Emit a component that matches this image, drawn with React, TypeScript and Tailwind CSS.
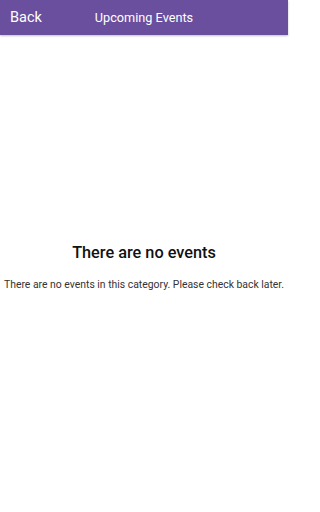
import React from "react";

export default function App() {
  return (
    <div className="flex h-[512px] w-[288px] flex-col bg-white font-['Roboto',sans-serif]">
      {/* Header */}
      <div className="grid h-[35px] shrink-0 grid-cols-[1fr_auto_1fr] items-center bg-[#6a4f9e] shadow-[0_1px_2px_rgba(0,0,0,0.25)]">
        <span className="ml-[10px] pt-[1px] text-[14.5px] leading-none text-white">Back</span>
        <span className="pt-[2px] text-[12.7px] leading-none text-white">Upcoming Events</span>
        <span />
      </div>

      {/* Empty state */}
      <div className="flex flex-1 flex-col items-center justify-center pb-[12px]">
        <h2 className="text-[16.3px] font-medium leading-none text-[#111]">There are no events</h2>
        <p className="mt-[19px] text-[10.4px] leading-none text-[#333]">
          There are no events in this category. Please check back later.
        </p>
      </div>
    </div>
  );
}
